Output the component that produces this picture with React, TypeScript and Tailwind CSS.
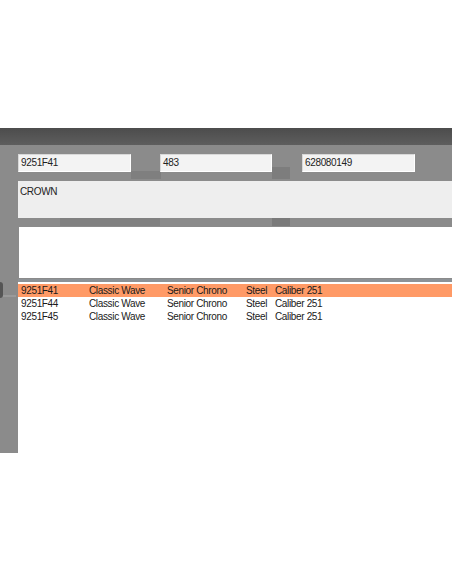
import React from 'react';

const rows = [
  { ref: '9251F41', line: 'Classic Wave', model: 'Senior Chrono', metal: 'Steel', movement: 'Caliber 251' },
  { ref: '9251F44', line: 'Classic Wave', model: 'Senior Chrono', metal: 'Steel', movement: 'Caliber 251' },
  { ref: '9251F45', line: 'Classic Wave', model: 'Senior Chrono', metal: 'Steel', movement: 'Caliber 251' },
];

function Field({ value, className }: { value: string; className: string }) {
  return (
    <div
      className={`h-[18px] border-t border-l border-[#d8d8d8] border-r border-b border-r-white border-b-white bg-[#f3f3f3] pl-[2px] text-[10px] leading-[16px] tracking-[-0.35px] text-[#222] ${className}`}
    >
      {value}
    </div>
  );
}

export default function App() {
  return (
    <div
      className="relative h-[584px] w-[452px] overflow-hidden bg-white"
      style={{ fontFamily: '"Liberation Sans", Arial, sans-serif' }}
    >
      <div className="h-[128px]" />
      {/* title strip */}
      <div className="h-[17px] bg-gradient-to-b from-[#4c4c4c] to-[#5e5e5e]" />

      {/* form panel */}
      <div className="relative h-[308px] bg-[#8b8b8b]">
        {/* faint background streaks */}
        <div className="absolute left-[131px] top-[26px] h-[8px] w-[30px] bg-[#7f7f7f]" />
        <div className="absolute left-[272px] top-[22px] h-[12px] w-[18px] bg-[#7d7d7d]" />
        <div className="absolute left-[60px] top-[73px] h-[8px] w-[100px] bg-[#808080]" />
        <div className="absolute left-[272px] top-[73px] h-[8px] w-[18px] bg-[#7a7a7a]" />
        <div className="absolute left-0 top-[150px] h-[2px] w-[16px] bg-[#9a9a9a]" />
        <div className="absolute left-0 top-[137px] h-[16px] w-[3px] rounded-r-sm bg-[#555]" />

        <div className="relative flex flex-col pl-[18px] pt-[9px]">
          <div className="flex h-[18px] items-start">
            <Field value="9251F41" className="w-[113px]" />
            <Field value="483" className="ml-[29px] w-[112px]" />
            <Field value="628080149" className="ml-[30px] w-[113px]" />
          </div>

          <div className="mt-[9px] h-[37px] bg-[#eeeeee] pl-[2px] pt-[4px] text-[10px] leading-[13px] tracking-[-0.35px] text-[#222]">
            CROWN
          </div>

          <div className="ml-[1px] mt-[9px] h-[51px] bg-white" />

          {/* parts list */}
          <div className="mt-[1px] h-[175px] border-t-[3px] border-[#8d9296] bg-white pt-[2px]">
            {rows.map((r, i) => (
              <div
                key={r.ref}
                className={`flex h-[13px] text-[10px] leading-[13px] tracking-[-0.35px] text-[#1a1a1a] ${i === 0 ? 'bg-[#ff9a66]' : ''}`}
              >
                <span className="w-[71px] pl-[3px]">{r.ref}</span>
                <span className="w-[78px]">{r.line}</span>
                <span className="w-[79px]">{r.model}</span>
                <span className="w-[29px]">{r.metal}</span>
                <span>{r.movement}</span>
              </div>
            ))}
          </div>
        </div>
      </div>
    </div>
  );
}
